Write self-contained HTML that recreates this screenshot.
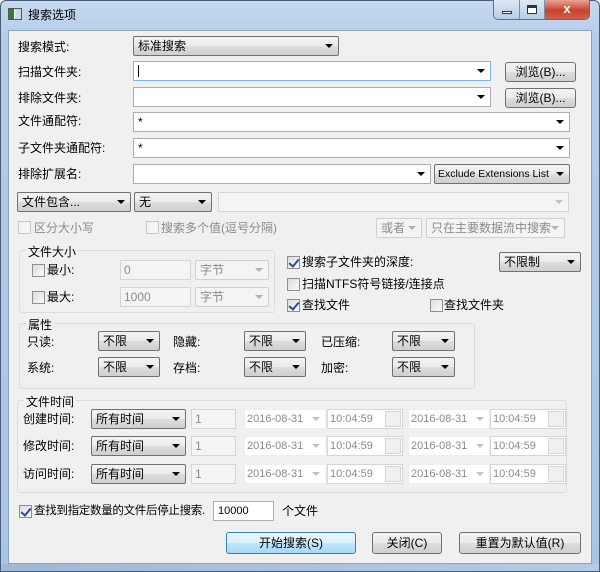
<!DOCTYPE html>
<html><head><meta charset="utf-8"><style>
*{box-sizing:border-box;margin:0;padding:0}
body{width:600px;height:572px;overflow:hidden;background:#fff;font-family:"Liberation Sans","Noto Sans CJK SC",sans-serif;font-size:12px;color:#000;position:relative}
.frame{position:absolute;left:0;top:0;width:600px;height:572px;border-radius:6px 6px 0 0;background:linear-gradient(#c5daf0,#b3cce8 40px,#aac6e6);border:1px solid #4a5d78}
.content{position:absolute;left:8px;top:30px;width:584px;height:534px;background:#f0f0f0;border:1px solid #8da2bd}
.a{position:absolute;white-space:nowrap}
.t{position:absolute;white-space:nowrap;line-height:14px}
.in{position:absolute;background:#fff;border:1px solid #abadb3;height:20px}
.in.f{border-color:#7eb4ea}
.in.d{background:#f4f4f4;border-color:#d5d5d5;color:#8a8a8a}
.cb{position:absolute;height:20px;border:1px solid #707070;border-radius:2px;background:linear-gradient(#f2f2f2,#ebebeb 50%,#dddddd 51%,#cfcfcf);padding:2px 4px;line-height:14px}
.cb.d{border-color:#d0d0d0;background:#f4f4f4;color:#8a8a8a}
.arr{position:absolute;right:5px;top:7px;width:0;height:0;border-left:4px solid transparent;border-right:4px solid transparent;border-top:4px solid #000}
.d .arr{border-top-color:#b0b0b0}
.btn{position:absolute;height:20px;border:1px solid #707070;border-radius:3px;background:linear-gradient(#f2f2f2,#ebebeb 50%,#dddddd 51%,#cfcfcf);text-align:center;line-height:18px}
.chk{position:absolute;width:13px;height:13px;border:1px solid #8e8f8f;background:linear-gradient(135deg,#dcdcdc,#fbfbfb)}
.chk.d{border-color:#c8c8c8;background:#f4f4f4}
.chk.on::after{content:"";position:absolute;left:3px;top:0px;width:4px;height:8px;border:solid #2c4a8c;border-width:0 2px 2px 0;transform:rotate(40deg)}
.grp{position:absolute;border:1px solid #dcdcdc;border-radius:3px}
.grp span{position:absolute;top:-8px;left:6px;background:#f0f0f0;padding:0 2px}
.g{color:#8a8a8a}
.spin{position:absolute;right:1px;top:1px;width:16px;height:16px;border:1px solid #d5d5d5;background:#f0f0f0}
.sm{font-size:11px}
</style></head><body>
<div class="frame"></div>
<div class="a" style="left:8px;top:8px;width:14px;height:12px;background:linear-gradient(90deg,#2d7a3c 0 40%,#fff 40% 50%,#cfd8e6 50%);border:1px solid #555"></div>
<div class="t" style="left:28px;top:8px">搜索选项</div>
<div class="a" style="left:493px;top:0;width:97px;height:20px;border:1px solid #5b6e88;border-top:none;border-radius:0 0 5px 5px;overflow:hidden;display:flex">
<div style="width:26px;background:linear-gradient(#dde8f5,#b8cce4);border-right:1px solid #7d8fa8;position:relative"><div style="position:absolute;left:8px;top:11px;width:10px;height:3px;border:1px solid #333;background:#fff"></div></div>
<div style="width:25px;background:linear-gradient(#dde8f5,#b8cce4);border-right:1px solid #7d8fa8;position:relative"><div style="position:absolute;left:7px;top:5px;width:10px;height:9px;border:1px solid #333;border-top-width:3px;background:#fff"></div></div>
<div style="flex:1;background:linear-gradient(#e8a494,#c7422c 55%,#d2604a);color:#fff;font-weight:bold;text-align:center;line-height:18px;font-size:13px">x</div></div>
<div class="content"></div>

<div class="t" style="left:18px;top:40px">搜索模式:</div>
<div class="cb" style="left:133px;top:36px;width:206px">标准搜索<i class="arr"></i></div>
<div class="t" style="left:18px;top:65px">扫描文件夹:</div>
<div class="in f" style="left:133px;top:61px;width:358px"><div class="a" style="left:4px;top:3px;width:1px;height:12px;background:#000"></div><i class="arr"></i></div>
<div class="btn" style="left:505px;top:62px;width:71px">浏览(B)...</div>
<div class="t" style="left:18px;top:91px">排除文件夹:</div>
<div class="in" style="left:133px;top:87px;width:358px"><i class="arr"></i></div>
<div class="btn" style="left:505px;top:88px;width:71px">浏览(B)...</div>
<div class="t" style="left:18px;top:114px">文件通配符:</div>
<div class="in" style="left:133px;top:112px;width:437px"><span class="a" style="left:4px;top:2px">*</span><i class="arr"></i></div>
<div class="t" style="left:18px;top:141px">子文件夹通配符:</div>
<div class="in" style="left:133px;top:138px;width:437px"><span class="a" style="left:4px;top:2px">*</span><i class="arr"></i></div>
<div class="t" style="left:18px;top:167px">排除扩展名:</div>
<div class="in" style="left:133px;top:164px;width:298px"><i class="arr"></i></div>
<div class="cb" style="left:434px;top:164px;width:136px;font-size:10.5px;padding-left:3px">Exclude Extensions List<i class="arr"></i></div>

<div class="cb" style="left:17px;top:192px;width:114px">文件包含...<i class="arr"></i></div>
<div class="cb" style="left:134px;top:192px;width:78px">无<i class="arr"></i></div>
<div class="in d" style="left:218px;top:192px;width:351px"><i class="arr" style="border-top-color:#c0c0c0"></i></div>

<div class="chk d" style="left:18px;top:221px"></div><div class="t g" style="left:34px;top:221px">区分大小写</div>
<div class="chk d" style="left:146px;top:221px"></div><div class="t g" style="left:161px;top:221px">搜索多个值(逗号分隔)</div>
<div class="cb d" style="left:376px;top:218px;width:46px">或者<i class="arr"></i></div>
<div class="cb d" style="left:426px;top:218px;width:139px">只在主要数据流中搜索<i class="arr"></i></div>

<div class="grp" style="left:19px;top:250px;width:256px;height:63px"><span>文件大小</span></div>
<div class="chk" style="left:32px;top:264px"></div><div class="t" style="left:47px;top:263px">最小:</div>
<div class="in d" style="left:120px;top:260px;width:71px"><span class="a" style="left:3px;top:2px">0</span></div>
<div class="cb d" style="left:195px;top:260px;width:74px">字节<i class="arr"></i></div>
<div class="chk" style="left:32px;top:291px"></div><div class="t" style="left:47px;top:290px">最大:</div>
<div class="in d" style="left:120px;top:287px;width:71px"><span class="a" style="left:3px;top:2px">1000</span></div>
<div class="cb d" style="left:195px;top:287px;width:74px">字节<i class="arr"></i></div>

<div class="chk on" style="left:287px;top:256px"></div><div class="t" style="left:302px;top:255px">搜索子文件夹的深度:</div>
<div class="cb" style="left:499px;top:252px;width:82px">不限制<i class="arr"></i></div>
<div class="chk" style="left:287px;top:278px"></div><div class="t" style="left:302px;top:277px">扫描NTFS符号链接/连接点</div>
<div class="chk on" style="left:287px;top:299px"></div><div class="t" style="left:302px;top:298px">查找文件</div>
<div class="chk" style="left:430px;top:299px"></div><div class="t" style="left:444px;top:298px">查找文件夹</div>

<div class="grp" style="left:19px;top:323px;width:456px;height:66px"><span>属性</span></div>
<div class="t" style="left:27px;top:335px">只读:</div><div class="cb" style="left:98px;top:331px;width:62px">不限<i class="arr"></i></div>
<div class="t" style="left:173px;top:335px">隐藏:</div><div class="cb" style="left:244px;top:331px;width:62px">不限<i class="arr"></i></div>
<div class="t" style="left:321px;top:335px">已压缩:</div><div class="cb" style="left:392px;top:331px;width:63px">不限<i class="arr"></i></div>
<div class="t" style="left:27px;top:361px">系统:</div><div class="cb" style="left:98px;top:357px;width:62px">不限<i class="arr"></i></div>
<div class="t" style="left:173px;top:361px">存档:</div><div class="cb" style="left:244px;top:357px;width:62px">不限<i class="arr"></i></div>
<div class="t" style="left:321px;top:361px">加密:</div><div class="cb" style="left:392px;top:357px;width:63px">不限<i class="arr"></i></div>

<div class="grp" style="left:17px;top:400px;width:550px;height:93px"><span>文件时间</span></div>
<div class="t" style="left:23px;top:412px">创建时间:</div>
<div class="t" style="left:23px;top:439px">修改时间:</div>
<div class="t" style="left:23px;top:467px">访问时间:</div>
<div id="rows"></div>

<div class="chk on" style="left:19px;top:505px"></div><div class="t" style="left:34px;top:504px;font-size:11.5px;letter-spacing:-0.3px">查找到指定数量的文件后停止搜索.</div>
<div class="in" style="left:213px;top:501px;width:61px"><span class="a" style="left:4px;top:3px;font-size:11px">10000</span></div>
<div class="t" style="left:282px;top:504px">个文件</div>

<div class="btn" style="left:226px;top:532px;width:130px;height:22px;line-height:20px;border-color:#3c7fb1;background:linear-gradient(#eaf6fd,#d9f0fc 50%,#bee6fd 51%,#a7d9f5)">开始搜索(S)</div>
<div class="btn" style="left:372px;top:532px;width:70px;height:22px;line-height:20px">关闭(C)</div>
<div class="btn" style="left:459px;top:532px;width:122px;height:22px;line-height:20px">重置为默认值(R)</div>
<div class="a" style="left:0;top:564px;width:600px;height:8px;background:linear-gradient(90deg,#9fb9d8,#b5cbe6);border:1px solid #4a5d78;border-top:none"></div>
<script>
var h='';[409,436,464].forEach(function(y){
h+='<div class="cb" style="left:91px;top:'+y+'px;width:95px">所有时间<i class="arr"></i></div>';
h+='<div class="in d" style="left:191px;top:'+y+'px;width:45px"><span class="a" style="left:3px;top:2px">1</span></div>';
[[244,327],[408,490]].forEach(function(p){
h+='<div class="in d sm" style="left:'+p[0]+'px;top:'+y+'px;width:82px;background:#fff;border-color:#eee"><span class="a" style="left:2px;top:3px">2016-08-31</span><i class="arr" style="border-top-color:#c0c0c0"></i></div>';
h+='<div class="in d sm" style="left:'+p[1]+'px;top:'+y+'px;width:76px;background:#fff"><span class="a" style="left:2px;top:3px">10:04:59</span><div class="spin"></div></div>';});});
document.getElementById('rows').outerHTML=h;
</script>
</body></html>
